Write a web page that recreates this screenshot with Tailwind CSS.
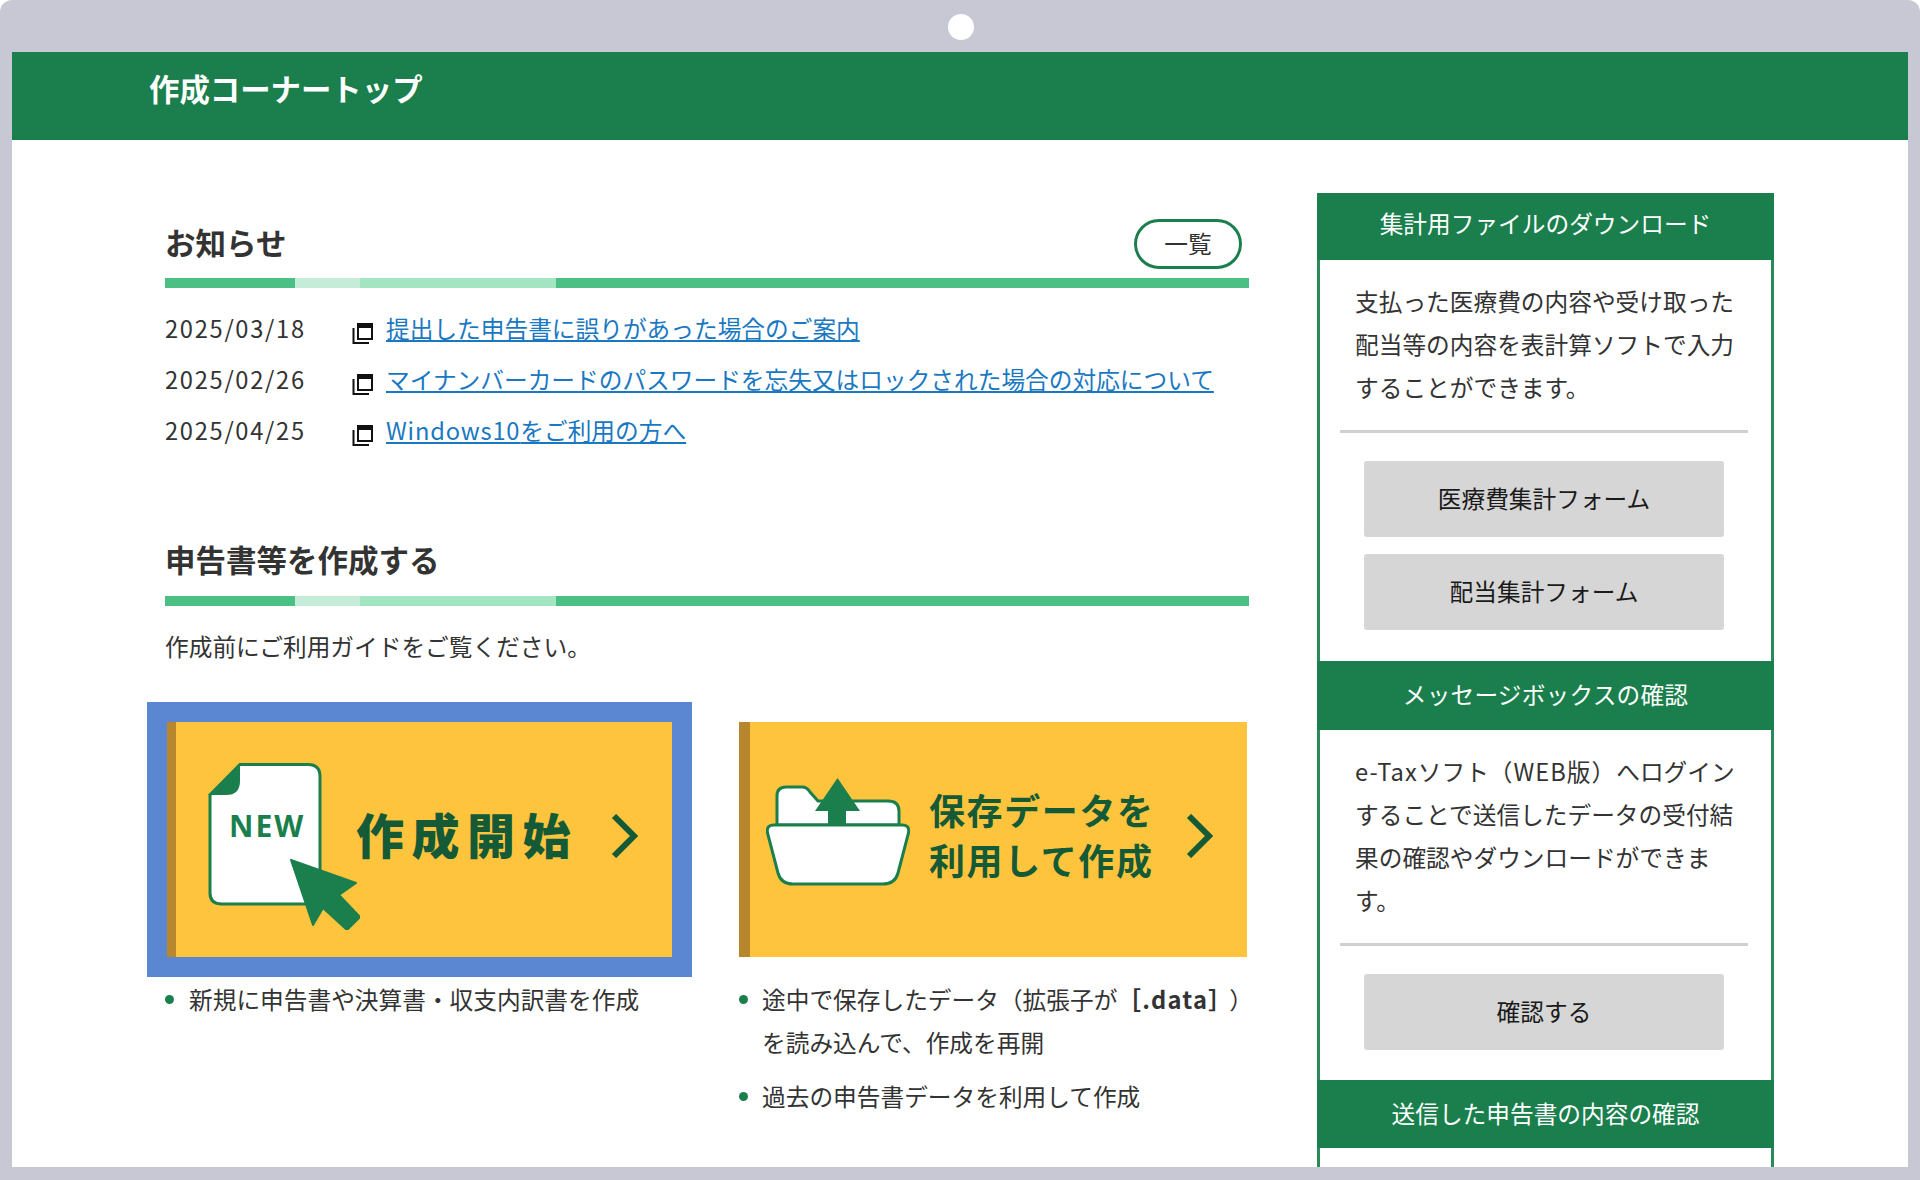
<!DOCTYPE html>
<html lang="ja">
<head>
    <meta charset="UTF-8">
    <meta name="viewport" content="width=device-width, initial-scale=1.0">
    <title>作成コーナートップ</title>
    <script src="https://cdn.jsdelivr.net/npm/@tailwindcss/browser@4"></script>
</head>
<body class="bg-white text-[#333] font-['Noto_Sans_CJK_JP','Noto_Sans',sans-serif] text-[23.7px]">

<div class="h-[1180px] overflow-hidden rounded-t-[12px] bg-[#c8c8d4] pt-[52px] px-3 pb-[13px] relative">
    <div class="absolute left-[948px] top-[14px] w-[26px] h-[26px] rounded-full bg-white"></div>

    <div class="h-full bg-white overflow-hidden">
        <header class="h-[88px] bg-[#1a7f4d] pl-[137px] pt-[14px]">
            <h1 class="text-white font-bold text-[30.4px] leading-[44px]">作成コーナートップ</h1>
        </header>

        <div class="flex pl-[153px]">
            <!-- left column -->
            <main class="w-[1084px] pt-[79px]">
                <div class="flex items-center justify-between h-[50px] pr-[7px]">
                    <h2 class="font-bold text-[30.5px] leading-[50px] mb-[4px]">お知らせ</h2>
                    <a class="w-[108px] h-[50px] border-[3px] border-[#1a7f4d] rounded-[25px] flex items-center justify-center">一覧</a>
                </div>
                <div class="flex h-[10px] mt-[9px]">
                    <div class="w-[130px] bg-[#4cc084]"></div>
                    <div class="w-[65px] bg-[#c5ecd8]"></div>
                    <div class="w-[196px] bg-[#a3e4c2]"></div>
                    <div class="flex-1 bg-[#4cc084]"></div>
                </div>

                <ul class="mt-[15px] leading-[51px]">
                    <li class="flex items-center">
                        <span class="w-[187px] tracking-[1.7px]">2025/03/18</span>
                        <svg class="mt-[10px] mr-[13px]" width="21" height="21" viewBox="0 0 21 21"><rect x="6" y="1" width="14" height="15" fill="#fff" stroke="#111" stroke-width="2"/><rect x="5" y="0" width="16" height="5" fill="#111"/><path d="M1.5 5V20H17" fill="none" stroke="#111" stroke-width="2"/></svg>
                        <a class="text-[#1a78c2] underline">提出した申告書に誤りがあった場合のご案内</a>
                    </li>
                    <li class="flex items-center">
                        <span class="w-[187px] tracking-[1.7px]">2025/02/26</span>
                        <svg class="mt-[10px] mr-[13px]" width="21" height="21" viewBox="0 0 21 21"><rect x="6" y="1" width="14" height="15" fill="#fff" stroke="#111" stroke-width="2"/><rect x="5" y="0" width="16" height="5" fill="#111"/><path d="M1.5 5V20H17" fill="none" stroke="#111" stroke-width="2"/></svg>
                        <a class="text-[#1a78c2] underline">マイナンバーカードのパスワードを忘失又はロックされた場合の対応について</a>
                    </li>
                    <li class="flex items-center">
                        <span class="w-[187px] tracking-[1.7px]">2025/04/25</span>
                        <svg class="mt-[10px] mr-[13px]" width="21" height="21" viewBox="0 0 21 21"><rect x="6" y="1" width="14" height="15" fill="#fff" stroke="#111" stroke-width="2"/><rect x="5" y="0" width="16" height="5" fill="#111"/><path d="M1.5 5V20H17" fill="none" stroke="#111" stroke-width="2"/></svg>
                        <a class="text-[#1a78c2] underline"><span class="tracking-[0.8px]">Windows10</span>をご利用の方へ</a>
                    </li>
                </ul>

                <h2 class="font-bold text-[30.5px] leading-[50px] mt-[78px]">申告書等を作成する</h2>
                <div class="flex h-[10px] mt-[12px]">
                    <div class="w-[130px] bg-[#4cc084]"></div>
                    <div class="w-[65px] bg-[#c5ecd8]"></div>
                    <div class="w-[196px] bg-[#a3e4c2]"></div>
                    <div class="flex-1 bg-[#4cc084]"></div>
                </div>
                <p class="mt-[19px] leading-[43px]">作成前にご利用ガイドをご覧ください。</p>

                <div class="grid grid-cols-[574px_509px] mt-[54px]">
                    <div>
                        <!-- new -->
                        <a class="ml-[2px] w-[505px] h-[235px] bg-[#ffc43d] border-l-[9px] border-[#b8862c] outline-[20px] outline-[#5b86d1] flex items-center pb-[8px] pl-[32px]">
                            <svg class="self-start mt-[41px] shrink-0" width="152" height="167" viewBox="0 0 152 167">
                                <path d="M32 1.5H100q12 0 12 12V130q0 11-12 11H14q-12 0-12-11V32Z" fill="#fff" stroke="#1a7f4d" stroke-width="3"/>
                                <path d="M32 0L0 32H18q14 0 14-14Z" fill="#1a7f4d"/>
                                <text x="21" y="74" font-family="Noto Sans, sans-serif" font-weight="700" font-size="30" letter-spacing="2" fill="#1a7f4d">NEW</text>
                                <path d="M83 97L148 120L131 132L152 154L139 167L115 145L105 162Z" fill="#1a7f4d" stroke="#1a7f4d" stroke-width="2" stroke-linejoin="round"/>
                            </svg>
                            <span class="-ml-[4px] mb-[6px] text-[#145a36] font-black text-[48px] tracking-[7.500px] leading-none whitespace-nowrap">作成開始</span>
                            <svg class="ml-[33px] shrink-0" width="27" height="44" viewBox="0 0 27 44"><path d="M3 2L23 22L3 42" fill="none" stroke="#145a36" stroke-width="6"/></svg>
                        </a>
                        <ul class="mt-[21px] leading-[43px]">
                            <li class="flex"><span class="w-[9px] h-[9px] rounded-full bg-[#1a7f4d] mt-[17px] mr-[15px] shrink-0"></span>新規に申告書や決算書・収支内訳書を作成</li>
                        </ul>
                    </div>
                    <div>
                        <!-- resume -->
                        <a class="w-[508px] h-[235px] bg-[#ffc43d] border-l-[11px] border-[#b8862c] flex items-center pb-[8px] pl-[16px]">
                            <svg class="self-start mt-[56px] shrink-0" width="144" height="108" viewBox="0 0 144 108">
                                <path d="M11 47V18q0-9 9-9H36q5 0 8 5L52 23H122q11 0 11 10V47Z" fill="#fff" stroke="#1a7f4d" stroke-width="3"/>
                                <path d="M71.5 0L94 33H80V48H62V33H49Z" fill="#1a7f4d"/>
                                <path d="M8 47H136q8 0 6.5 8L132 95q-3 11-15 11H27q-12 0-15-11L1.5 55q-1.500-8 6.500-8Z" fill="#fff" stroke="#1a7f4d" stroke-width="3"/>
                            </svg>
                            <span class="ml-[19px] mb-[4px] w-[227px] text-[#145a36] font-bold text-[36px] tracking-[1.600px] leading-[50px] whitespace-nowrap">保存データを<br>利用して作成</span>
                            <svg class="ml-[30px] shrink-0" width="27" height="44" viewBox="0 0 27 44"><path d="M3 2L23 22L3 42" fill="none" stroke="#145a36" stroke-width="6"/></svg>
                        </a>
                        <ul class="mt-[21px] leading-[43px] flex flex-col gap-[11px]">
                            <li class="flex"><span class="w-[9px] h-[9px] rounded-full bg-[#1a7f4d] mt-[17px] mr-[14px] shrink-0"></span><span class="whitespace-nowrap">途中で保存したデータ（拡張子が<b class="tracking-[1.2px]">［.data］</b><span class="ml-[8px]">）</span><br>を読み込んで、作成を再開</span></li>
                            <li class="flex"><span class="w-[9px] h-[9px] rounded-full bg-[#1a7f4d] mt-[17px] mr-[14px] shrink-0"></span>過去の申告書データを利用して作成</li>
                        </ul>
                    </div>
                </div>
            </main>

            <!-- sidebar -->
            <aside class="w-[457px] ml-[68px] mt-[53px]">
                <h3 class="h-[67px] bg-[#1a7f4d] text-white text-center leading-[60px] font-normal">集計用ファイルのダウンロード</h3>
                <div class="border-x-[3px] border-[#2a8a5c] pt-[20px] pb-[31px]">
                    <p class="pl-[35px] pr-[25px] leading-[43px]">支払った医療費の内容や受け取った配当等の内容を表計算ソフトで入力することができます。</p>
                    <div class="h-[3px] bg-[#d0d0d0] ml-[20px] mr-[23px] mt-[21px]"></div>
                    <a class="ml-[44px] mt-[28px] w-[360px] h-[76px] bg-[#d6d6d6] rounded-[3px] flex items-center justify-center text-[#1a1a1a]">医療費集計フォーム</a>
                    <a class="ml-[44px] mt-[17px] w-[360px] h-[76px] bg-[#d6d6d6] rounded-[3px] flex items-center justify-center text-[#1a1a1a]">配当集計フォーム</a>
                </div>
                <h3 class="h-[69px] bg-[#1a7f4d] text-white text-center leading-[66px] font-normal tracking-[0.2px]">メッセージボックスの確認</h3>
                <div class="border-x-[3px] border-[#2a8a5c] pt-[20px] pb-[30px]">
                    <p class="pl-[35px] pr-[25px] leading-[43px]"><span class="tracking-[1px]">e-Tax</span>ソフト<span class="tracking-[1px]">（WEB版）</span>へログインすることで送信したデータの受付結果の確認やダウンロードができます。</p>
                    <div class="h-[3px] bg-[#d0d0d0] ml-[20px] mr-[23px] mt-[21px]"></div>
                    <a class="ml-[44px] mt-[28px] w-[360px] h-[76px] bg-[#d6d6d6] rounded-[3px] flex items-center justify-center text-[#1a1a1a]">確認する</a>
                </div>
                <h3 class="h-[68px] bg-[#1a7f4d] text-white text-center leading-[66px] font-normal">送信した申告書の内容の確認</h3>
                <div class="border-x-[3px] border-[#2a8a5c] h-[40px]"></div>
            </aside>
        </div>
    </div>
</div>

</body>
</html>
